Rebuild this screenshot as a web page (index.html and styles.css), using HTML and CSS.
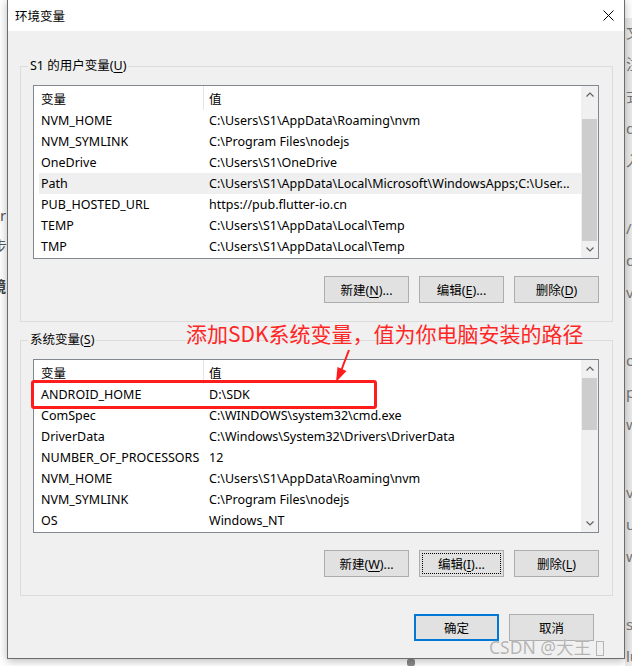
FILE: index.html
```html
<!DOCTYPE html>
<html lang="zh-cn">

<head>
    <meta charset="UTF-8">
    <meta name="viewport" content="width=device-width, initial-scale=1.0">
    <title>环境变量</title>
    <link rel="stylesheet" href="styles.css">
</head>

<body>
    <div class="desk">
        <!-- bits of the page behind the window -->
        <div class="page-left">
            <span class="frag fl1">r</span>
            <span class="frag fl2">步</span>
            <span class="frag fl3">镜</span>
        </div>
        <div class="page-right">
            <span class="frag">文</span>
            <span class="frag">注</span>
            <span class="frag">式</span>
            <span class="frag">d</span>
            <span class="frag">入</span>
            <span class="frag gap">/</span>
            <span class="frag">d</span>
            <span class="frag">v</span>
            <span class="frag gap">o</span>
            <span class="frag">pi</span>
            <span class="frag">w</span>
            <span class="frag gap">v</span>
            <span class="frag">u</span>
            <span class="frag">w</span>
            <span class="frag gap">s:</span>
            <span class="frag">lu</span>
            <span class="frag">9</span>
        </div>
        <div class="blob"></div>

        <div class="dialog">
            <div class="titlebar">
                <span class="title">环境变量</span>
                <svg class="close" width="11" height="11" viewBox="0 0 11 11">
                    <path d="M0.5 0.5 L10.5 10.5 M10.5 0.5 L0.5 10.5" stroke="#000" stroke-width="1" fill="none" />
                </svg>
            </div>
            <div class="body">
                <fieldset class="group">
                    <legend>S1 的用户变量(<u>U</u>)</legend>
                    <div class="list">
                        <div class="list-main">
                            <div class="list-head"><span>变量</span><span>值</span></div>
                            <div class="row"><span>NVM_HOME</span><span>C:\Users\S1\AppData\Roaming\nvm</span></div>
                            <div class="row"><span>NVM_SYMLINK</span><span>C:\Program Files\nodejs</span></div>
                            <div class="row"><span>OneDrive</span><span>C:\Users\S1\OneDrive</span></div>
                            <div class="row hover"><span>Path</span><span>C:\Users\S1\AppData\Local\Microsoft\WindowsApps;C:\User...</span></div>
                            <div class="row"><span>PUB_HOSTED_URL</span><span>https://pub.flutter-io.cn</span></div>
                            <div class="row"><span>TEMP</span><span>C:\Users\S1\AppData\Local\Temp</span></div>
                            <div class="row"><span>TMP</span><span>C:\Users\S1\AppData\Local\Temp</span></div>
                        </div>
                        <div class="scrollbar">
                            <div class="sb-btn">
                                <svg width="8" height="5" viewBox="0 0 8 5"><path d="M0.5 4.5 L4 1 L7.5 4.5" stroke="#606060" stroke-width="1.2" fill="none" /></svg>
                            </div>
                            <div class="sb-track"><div class="sb-thumb user-thumb"></div></div>
                            <div class="sb-btn">
                                <svg width="8" height="5" viewBox="0 0 8 5"><path d="M0.5 0.5 L4 4 L7.5 0.5" stroke="#606060" stroke-width="1.2" fill="none" /></svg>
                            </div>
                        </div>
                    </div>
                    <div class="btns">
                        <button class="btn">新建(<u>N</u>)...</button>
                        <button class="btn">编辑(<u>E</u>)...</button>
                        <button class="btn">删除(<u>D</u>)</button>
                    </div>
                </fieldset>

                <fieldset class="group second">
                    <legend>系统变量(<u>S</u>)</legend>
                    <div class="list">
                        <div class="list-main">
                            <div class="list-head"><span>变量</span><span>值</span></div>
                            <div class="row"><span>ANDROID_HOME</span><span>D:\SDK</span></div>
                            <div class="row"><span>ComSpec</span><span>C:\WINDOWS\system32\cmd.exe</span></div>
                            <div class="row"><span>DriverData</span><span>C:\Windows\System32\Drivers\DriverData</span></div>
                            <div class="row"><span>NUMBER_OF_PROCESSORS</span><span>12</span></div>
                            <div class="row"><span>NVM_HOME</span><span>C:\Users\S1\AppData\Roaming\nvm</span></div>
                            <div class="row"><span>NVM_SYMLINK</span><span>C:\Program Files\nodejs</span></div>
                            <div class="row"><span>OS</span><span>Windows_NT</span></div>
                        </div>
                        <div class="scrollbar">
                            <div class="sb-btn">
                                <svg width="8" height="5" viewBox="0 0 8 5"><path d="M0.5 4.5 L4 1 L7.5 4.5" stroke="#606060" stroke-width="1.2" fill="none" /></svg>
                            </div>
                            <div class="sb-track"><div class="sb-thumb sys-thumb"></div></div>
                            <div class="sb-btn">
                                <svg width="8" height="5" viewBox="0 0 8 5"><path d="M0.5 0.5 L4 4 L7.5 0.5" stroke="#606060" stroke-width="1.2" fill="none" /></svg>
                            </div>
                        </div>
                    </div>
                    <div class="btns">
                        <button class="btn">新建(<u>W</u>)...</button>
                        <button class="btn focus">编辑(<u>I</u>)...</button>
                        <button class="btn">删除(<u>L</u>)</button>
                    </div>
                </fieldset>

                <div class="dialog-btns">
                    <button class="btn primary">确定</button>
                    <button class="btn">取消</button>
                </div>
            </div>
        </div>

        <!-- annotation drawn over the screenshot -->
        <div class="note">添加SDK系统变量，值为你电脑安装的路径</div>
        <svg class="arrow" width="24" height="34" viewBox="0 0 24 34">
            <path d="M18 1 L10 22" stroke="#ff1c1c" stroke-width="2" fill="none" />
            <path d="M5 33 L6.5 18 L15.5 22 Z" fill="#ff1c1c" />
        </svg>
        <div class="mark"></div>
        <div class="watermark">CSDN @大王 <span class="tofu"></span></div>
    </div>
</body>

</html>
```

FILE: styles.css
```css
* {
    padding: 0;
    margin: 0;
    box-sizing: border-box;
}

body {
    width: 632px;
    height: 666px;
    overflow: hidden;
    background-color: #fff;
    font-family: "Noto Sans", "Noto Sans CJK SC", sans-serif;
    font-size: 12.5px;
    color: #000;
}

u {
    text-decoration: underline;
    text-underline-offset: 2px;
}

.desk {
    position: relative;
    width: 632px;
    height: 666px;
}

/* background page */
.page-left {
    position: absolute;
    left: 0;
    top: 0;
    width: 8px;
    height: 666px;
    overflow: hidden;
}

.frag {
    position: relative;
    display: block;
    color: #555;
    font-size: 15px;
    line-height: 30px;
}

.fl1 {
    position: absolute;
    top: 200px;
    left: 0;
}

.fl2 {
    position: absolute;
    top: 231px;
    left: -8px;
}

.fl3 {
    position: absolute;
    top: 271px;
    left: -9px;
    font-weight: bold;
    color: #444;
}

.page-right {
    position: absolute;
    left: 625px;
    top: 0;
    width: 7px;
    height: 666px;
    overflow: hidden;
    padding-top: 16px;
    background: linear-gradient(#fff 0, #fff 18px, #ebebeb 18px);
}

.page-right .frag {
    left: 1px;
    line-height: 32px;
    font-size: 15px;
    color: #777;
}

.page-right .gap {
    margin-top: 36px;
}

.blob {
    position: absolute;
    left: 407px;
    top: 659px;
    width: 8px;
    height: 7px;
    border-radius: 2px;
    background-color: #8a8a8a;
}

/* window */
.dialog {
    position: absolute;
    left: 7px;
    top: -1px;
    width: 618px;
    height: 660px;
    border: 1px solid #6c6c6c;
    background-color: #f0f0f0;
    box-shadow: 0 2px 9px rgba(0, 0, 0, .28);
    display: flex;
    flex-direction: column;
}

.titlebar {
    height: 31px;
    background-color: #fff;
    display: flex;
    align-items: center;
    justify-content: space-between;
    padding: 0 10px 0 7px;
}

.title {
    font-size: 12.5px;
}

.close {
    display: block;
}

.body {
    padding: 27px 11px 0 12px;
}

.group {
    border: 1px solid #dcdcdc;
    padding: 11px 13px 18px 12px;
    min-width: 0;
}

.group.second {
    margin-top: 10px;
}

.group legend {
    line-height: 16px;
    padding: 0 2px;
    margin-left: -5px;
}

.list {
    height: 174px;
    border: 1px solid #828790;
    background-color: #fff;
    display: flex;
}

.list-main {
    flex: 1;
    min-width: 0;
    overflow: hidden;
}

.list-head,
.row {
    display: grid;
    grid-template-columns: 164px 1fr;
    margin-left: 5px;
    white-space: nowrap;
}

.list-head {
    height: 24px;
}

.list-head span {
    display: flex;
    align-items: center;
    padding-left: 2px;
}

.list-head span + span {
    border-left: 1px solid #e5e5e5;
    padding-left: 5px;
}

.row {
    height: 21px;
    align-items: center;
}

.row span {
    padding-left: 2px;
    overflow: hidden;
}

.row span + span {
    padding-left: 6px;
}

.row.hover {
    background-color: #efefef;
}

.scrollbar {
    width: 17px;
    background-color: #f0f0f0;
    display: flex;
    flex-direction: column;
}

.sb-btn {
    height: 17px;
    display: flex;
    align-items: center;
    justify-content: center;
}

.sb-btn svg {
    display: block;
}

.sb-track {
    flex: 1;
    padding: 0 1px;
}

.sb-thumb {
    background-color: #cdcdcd;
}

.user-thumb {
    margin-top: 16px;
    height: 122px;
}

.sys-thumb {
    margin-top: 1px;
    height: 52px;
}

.btns,
.dialog-btns {
    display: flex;
    justify-content: flex-end;
    gap: 10px;
}

.btns {
    margin-top: 17px;
}

.dialog-btns {
    margin-top: 18px;
    padding-right: 19px;
}

.btn {
    width: 85px;
    height: 27px;
    border: 1px solid #adadad;
    background-color: #e1e1e1;
    font-family: inherit;
    font-size: 12.5px;
    color: #000;
}

.btn.focus {
    outline: 1px dotted #000;
    outline-offset: -4px;
}

.btn.primary {
    border: 2px solid #0078d7;
}

/* red annotation */
.note {
    position: absolute;
    left: 186px;
    top: 320px;
    font-family: "Noto Sans CJK SC", sans-serif;
    font-size: 21px;
    line-height: 26px;
    color: #ff2626;
    white-space: nowrap;
}

.arrow {
    position: absolute;
    left: 331px;
    top: 349px;
}

.mark {
    position: absolute;
    left: 31px;
    top: 380px;
    width: 346px;
    height: 29px;
    border: 3px solid #ff1c1c;
    border-radius: 3px;
}

.watermark {
    position: absolute;
    left: 489px;
    top: 635px;
    font-family: "Noto Sans", "Noto Sans CJK SC", sans-serif;
    font-size: 17.5px;
    line-height: 24px;
    color: #b4b4b4;
    text-shadow: 0 0 1px #fff;
    white-space: nowrap;
}

.tofu {
    display: inline-block;
    width: 8px;
    height: 15px;
    border: 1px solid #b4b4b4;
    vertical-align: -2px;
}
```
